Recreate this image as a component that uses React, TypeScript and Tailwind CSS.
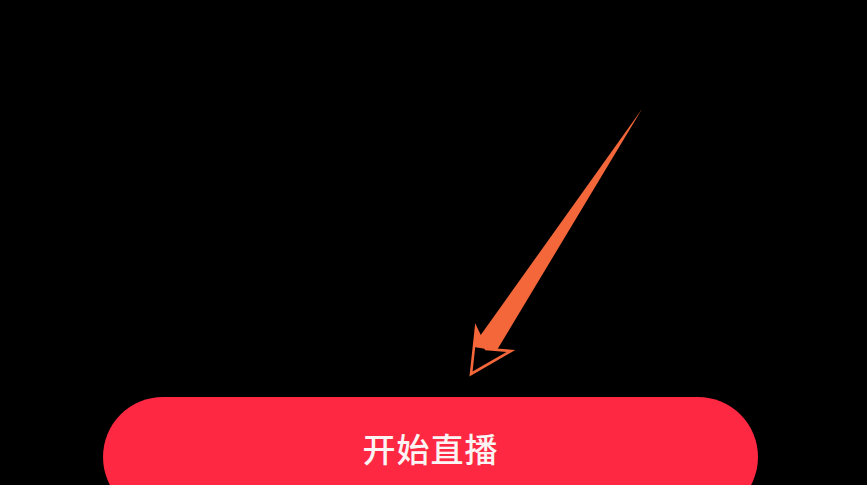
import React from "react";

function Arrow() {
  return (
    <svg
      className="pointer-events-none absolute left-0 top-0"
      width={867}
      height={485}
      viewBox="0 0 867 485"
    >
      {/* shaft */}
      <path d="M642,109 L497,350 L485,349 L480,336 Z" fill="#f4673a" />
      {/* head */}
      <path d="M476,328 L486,349 L474,347 Z" fill="#f4673a" />
      <path
        d="M476,328 L471,374 L511,351 L486,349 Z"
        fill="none"
        stroke="#f4673a"
        strokeWidth={2.6}
        strokeLinejoin="miter"
      />
    </svg>
  );
}

export default function App() {
  return (
    <div
      className="relative flex h-[485px] w-full flex-col justify-end overflow-hidden bg-black"
      style={{ fontFamily: '"Noto Sans CJK SC", "Noto Sans", sans-serif' }}
    >
      <Arrow />
      <button className="mb-[-32px] ml-[103px] flex h-[120px] w-[655px] items-start justify-center rounded-full bg-[#fe2843] pt-[31px] text-[33px] font-medium leading-[40px] tracking-[1px] text-[#fbf4f4]">
        开始直播
      </button>
    </div>
  );
}
